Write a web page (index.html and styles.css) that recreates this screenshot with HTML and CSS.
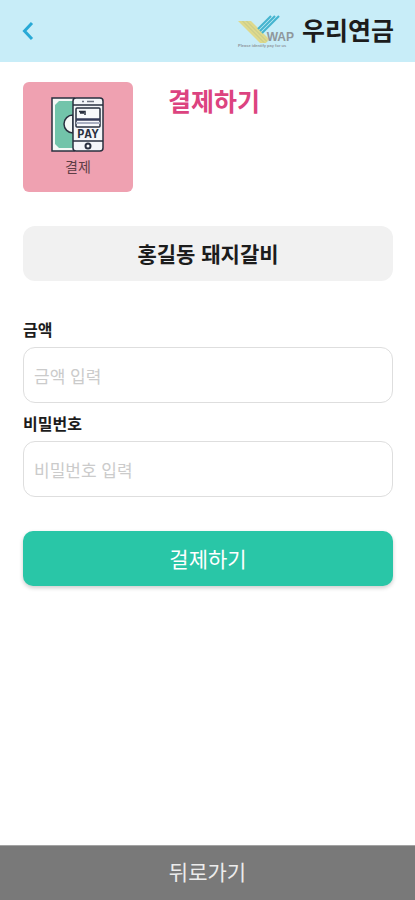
FILE: index.html
```html
<!DOCTYPE html>
<html lang="ko">
<head>
<meta charset="utf-8">
<meta name="viewport" content="width=device-width, initial-scale=1">
<title>결제하기</title>
<link rel="stylesheet" href="styles.css">
</head>
<body>
<header class="topbar">
  <button class="back" type="button" aria-label="뒤로">
    <svg width="12" height="20" viewBox="0 0 12 20" fill="none" stroke="#28a9d6" stroke-width="3"><path d="M10 2 2.500 10 10 18"/></svg>
  </button>
  <div class="brand">
    <div class="logo">
      <svg class="logo-mark" width="44" height="29" viewBox="0 0 44 29" fill="none">
        <path d="M0 7H13L31 25 28 29H22Z" fill="#ded98c"/>
        <path d="M4.500 7 26 28.500M8.500 7 29 27.500" stroke="#bfc88c" stroke-width="1"/>
        <g stroke="#45b4cf" stroke-width="2.200"><path d="M33 2 20 15"/><path d="M37 2 22 17"/><path d="M41 2 24 19"/></g>
      </svg>
      <span class="logo-name">WAP</span>
      <span class="logo-tagline">Please identify pay for us</span>
    </div>
    <span class="brand-name">우리연금</span>
  </div>
</header>
<main class="content">
  <section class="intro">
    <div class="tile">
      <svg class="tile-icon" width="54" height="55" viewBox="0 0 54 55" fill="none">
        <path d="M1 1H23V54H1Z" fill="#f4f8f6" stroke="#29303f" stroke-width="1.500"/>
        <path d="M8 4H22V51H8L4 47V8Z" fill="#72c4aa"/>
        <path d="M22 18A9 9 0 0 0 22 36Z" fill="#f4f8f6" stroke="#29303f" stroke-width="1.500"/>
        <rect x="22" y="1" width="30" height="53" rx="3" fill="#f4f6f9" stroke="#29303f" stroke-width="1.500"/>
        <path d="M22 8H52M22 44H52" stroke="#29303f" stroke-width="1.500"/>
        <path d="M31 4.500H33M36 4.500H43" stroke="#6c7280" stroke-width="1.500"/>
        <rect x="25" y="11" width="24" height="19" rx="1" fill="#f7f9fb" stroke="#29303f" stroke-width="1.500"/>
        <path d="M25 22.500H49" stroke="#343b58" stroke-width="2.500"/>
        <path d="M25 26H49" stroke="#a9b0c2" stroke-width="2"/>
        <path d="M28 14.500H34V18M29 16H33" stroke="#29303f" stroke-width="1.500"/>
        <text class="pay" x="37" y="41" text-anchor="middle">PAY</text>
        <circle cx="37" cy="49" r="2.500" fill="#fff" stroke="#29303f" stroke-width="2"/>
      </svg>
      <span class="tile-label">결제</span>
    </div>
    <h1 class="title">결제하기</h1>
  </section>
  <div class="store">홍길동 돼지갈비</div>
  <form class="form">
    <label class="label" for="amount">금액</label>
    <input class="field" id="amount" type="text" inputmode="numeric" placeholder="금액 입력">
    <label class="label" for="password">비밀번호</label>
    <input class="field" id="password" type="password" placeholder="비밀번호 입력">
    <button class="submit" type="button">걸제하기</button>
  </form>
</main>
<button class="footer" type="button">뒤로가기</button>
</body>
</html>
```
FILE: styles.css
```css
* {
  box-sizing: border-box;
}

body {
  margin: 0;
  min-height: 100vh;
  display: flex;
  flex-direction: column;
  background: #fff;
  color: #1c1c1c;
  font-family: "Noto Sans CJK KR", sans-serif;
}

button,
input {
  font-family: inherit;
}

.topbar {
  display: flex;
  align-items: center;
  justify-content: space-between;
  height: 62px;
  padding: 0 21px 0 22px;
  background: #c8edf8;
}

.back {
  display: flex;
  padding: 0;
  border: 0;
  background: none;
}

.brand {
  display: flex;
  align-items: center;
  gap: 8px;
}

.logo {
  position: relative;
  width: 56px;
  height: 34px;
}

.logo-mark {
  display: block;
}

.logo-name {
  position: absolute;
  right: 0;
  bottom: 6px;
  color: #8f979c;
  font: bold 12px/10px "Liberation Sans", sans-serif;
}

.logo-tagline {
  position: absolute;
  left: 0;
  bottom: 0;
  color: #8f979c;
  font: bold 4px/4px "Liberation Sans", sans-serif;
  white-space: nowrap;
}

.brand-name {
  padding-bottom: 4px;
  font-size: 25px;
  font-weight: 700;
  line-height: 36px;
}

.content {
  flex: 1;
  padding: 20px 22px 20px 23px;
}

.intro {
  display: flex;
  align-items: flex-start;
  gap: 35px;
}

.tile {
  display: flex;
  flex-direction: column;
  align-items: center;
  width: 110px;
  height: 110px;
  padding-top: 15px;
  border-radius: 6px;
  background: #efa1b1;
}

.tile-icon {
  flex: none;
}

.pay {
  fill: #29303f;
  font: bold 12px "Liberation Mono", monospace;
}

.tile-label {
  margin-top: 4px;
  color: #5e3e46;
  font-size: 14px;
  line-height: 20px;
}

.title {
  margin: 0;
  color: #dc4380;
  font-size: 25px;
  font-weight: 700;
  line-height: 36px;
}

.store {
  margin-top: 34px;
  border-radius: 12px;
  background: #f1f1f1;
  font-size: 21px;
  font-weight: 700;
  line-height: 55px;
  text-align: center;
}

.form {
  display: flex;
  flex-direction: column;
  margin-top: 34px;
}

.label {
  padding: 2px 0 6px;
  font-size: 16px;
  font-weight: 700;
  line-height: 24px;
}

.field {
  width: 100%;
  height: 56px;
  margin-bottom: 6px;
  padding: 0 10px;
  border: 1px solid #dedede;
  border-radius: 12px;
  background: #fff;
  color: #1c1c1c;
  font-size: 17px;
}

.field::placeholder {
  color: #cbcbcb;
}

.submit {
  height: 55px;
  margin-top: 28px;
  padding: 0 0 2px;
  border: 0;
  border-radius: 10px;
  background: #29c6a7;
  box-shadow: 0 2px 4px #00000033;
  color: #fff;
  font-size: 21px;
}

.footer {
  height: 55px;
  padding: 0 0 4px;
  border: 0;
  border-top: 1px solid #a3a3a3;
  background: #797979;
  color: #ececec;
  font-size: 21px;
}
```
